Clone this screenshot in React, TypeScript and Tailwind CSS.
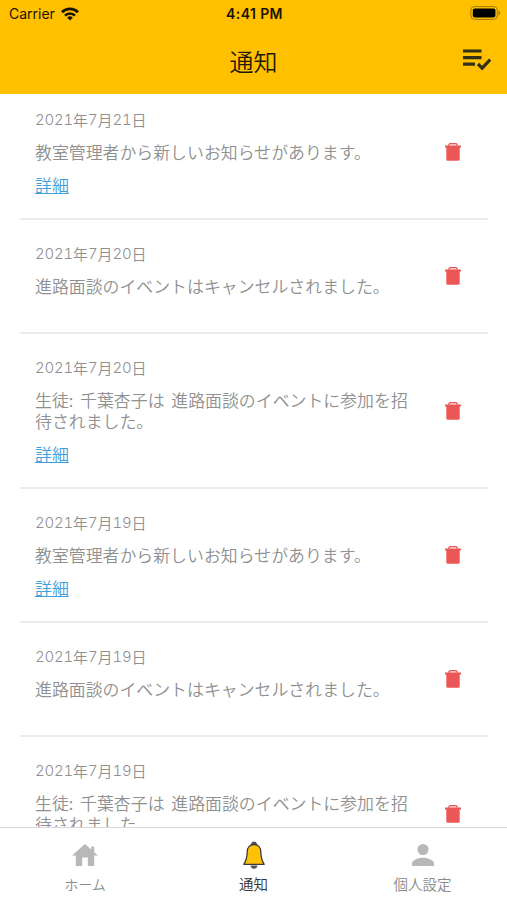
type Notice = {
  id: number;
  date: string;
  message: string;
  hasDetail: boolean;
};

const notices: Notice[] = [
  { id: 1, date: "2021年7月21日", message: "教室管理者から新しいお知らせがあります。", hasDetail: true },
  { id: 2, date: "2021年7月20日", message: "進路面談のイベントはキャンセルされました。", hasDetail: false },
  { id: 3, date: "2021年7月20日", message: "生徒: 千葉杏子は 進路面談のイベントに参加を招待されました。", hasDetail: true },
  { id: 4, date: "2021年7月19日", message: "教室管理者から新しいお知らせがあります。", hasDetail: true },
  { id: 5, date: "2021年7月19日", message: "進路面談のイベントはキャンセルされました。", hasDetail: false },
  { id: 6, date: "2021年7月19日", message: "生徒: 千葉杏子は 進路面談のイベントに参加を招待されました。", hasDetail: true },
];

function WifiIcon() {
  return (
    <svg viewBox="0 0 18 14" className="w-[18px] h-[14px]" fill="none" stroke="#1a1400" strokeWidth="2.7">
      <path d="M1 5.2a11.3 11.3 0 0 1 16 0" />
      <path d="M4 8.6a7 7 0 0 1 10 0" />
      <path d="M9 13.6 6.2 10.7a4 4 0 0 1 5.6 0z" fill="#1a1400" stroke="none" />
    </svg>
  );
}

function BatteryIcon() {
  return (
    <svg viewBox="0 0 31 14" className="w-[31px] h-[14px]">
      <rect x="0.9" y="0.6" width="26.4" height="12.8" rx="3.6" fill="none" stroke="#a37b00" strokeWidth="1" />
      <rect x="2.8" y="2.6" width="22.6" height="8.8" rx="2" fill="#000" />
      <path d="M28.5 4.6v4.8c1-.4 1.7-1.4 1.7-2.4s-.7-2-1.7-2.4z" fill="#a37b00" />
    </svg>
  );
}

function ReadAllIcon() {
  return (
    <svg viewBox="0 0 28 21" className="w-7 h-[21px]" fill="none" stroke="#333018" strokeWidth="3.2">
      <path d="M0 2h18.5M0 8.6h18.5M0 15.2h12" />
      <path d="m15 15 4.2 4.2L27.2 10.5" />
    </svg>
  );
}

function TrashIcon() {
  return (
    <svg viewBox="0 0 18 20" className="w-[18px] h-5" fill="#eb5757">
      <path d="M4.3 3.7 5.8 1.6h6.4l1.5 2.1" fill="#fbdcdc" stroke="#eb5757" strokeWidth="1.2" />
      <path d="M1 3.6h16v1.8H15.7v11.8a1.5 1.5 0 0 1-1.5 1.5H3.8a1.5 1.5 0 0 1-1.5-1.5V5.4H1z" />
    </svg>
  );
}

function HomeIcon() {
  return (
    <svg viewBox="0 0 26 22" className="w-[26px] h-[22px]" fill="#b8b8b8">
      <path d="M13 0 0 11.6h3.8V22h6.4v-8.4h5.6V22h6.4V11.6H26l-3.8-3.4V2.6h-3v2.9z" />
    </svg>
  );
}

function BellIcon() {
  return (
    <svg viewBox="0 0 24 28" className="w-6 h-7" stroke="#3a3a3a" strokeWidth="1.3" strokeLinejoin="round">
      <path d="M9.2 25.2h5.6c-.6 1.3-1.6 1.8-2.8 1.8s-2.2-.5-2.8-1.8z" fill="#3a3a3a" stroke="#555" />
      <path d="M9.6 3.2C10 1.7 10.8 1.2 12 1.2s2 .5 2.4 2z" fill="#3a3a3a" stroke="#555" />
      <path d="M12 3.5c-4.3 0-6.8 3.1-6.8 7.3 0 6-.7 8.6-3.4 12.5h20.4c-2.7-3.9-3.4-6.5-3.4-12.5 0-4.2-2.5-7.3-6.8-7.3z" fill="#ffc107" />
    </svg>
  );
}

function PersonIcon() {
  return (
    <svg viewBox="0 0 22 22" className="w-[22px] h-[22px]" fill="#b8b8b8">
      <circle cx="11" cy="5.5" r="5.5" />
      <path d="M0 22v-2.7c0-3.7 7.3-5.6 11-5.6s11 1.9 11 5.600V22z" />
    </svg>
  );
}

// Digits use a wider face than the kanji around them
function NoticeDate({ value }: { value: string }) {
  return (
    <p className="flex h-[18px] text-[15px] leading-[18px]">
      {value.split(/(\d+)/).map((part, i) => (
        <span key={i} className={/\d/.test(part) ? "font-['Inter',sans-serif] tabular-nums tracking-[-0.2px]" : ""}>
          {part}
        </span>
      ))}
    </p>
  );
}

function NoticeRow({ notice }: { notice: Notice }) {
  return (
    <li className="flex items-center border-b-2 border-[#e9ebed] pl-[15px] pr-[26px]">
      <div className={`w-[378px] pt-[25px] text-[#909090] ${notice.hasDetail ? "pb-[23px]" : "pb-[36px]"}`}>
        <NoticeDate value={notice.date} />
        <p className="mt-3 text-[16.9px] leading-[21px] [word-spacing:3px]">{notice.message}</p>
        {notice.hasDetail && (
          <a href="#" className="mt-3 block h-[21px] w-fit text-[16.9px] leading-[21px] text-[#3f9fdc] underline underline-offset-1">
            詳細
          </a>
        )}
      </div>
      <button className="ml-auto" aria-label="削除">
        <TrashIcon />
      </button>
    </li>
  );
}

export default function App() {
  return (
    <div className="flex h-[900px] w-[507px] flex-col overflow-hidden bg-white font-['Noto_Sans_CJK_JP',sans-serif] font-[350]">
      <header className="h-[94px] shrink-0 bg-[#ffc000]">
        {/* Status bar */}
        <div className="grid h-[26px] grid-cols-3 items-center pl-[9px] pr-[6px] font-['Inter',sans-serif] text-[14px] text-[#1a1400]">
          <div className="flex items-center gap-[6px] pt-px font-normal">
            Carrier
            <WifiIcon />
          </div>
          <span className="pr-px pt-px text-center font-semibold tracking-[0.4px]">4:41 PM</span>
          <div className="flex justify-end">
            <BatteryIcon />
          </div>
        </div>
        <div className="grid h-[70px] grid-cols-3 items-center pr-4">
          <span />
          <h1 className="pl-4 text-center text-[24px] text-[#1f1a08]">通知</h1>
          <button className="mb-1 ml-auto" aria-label="すべて既読">
            <ReadAllIcon />
          </button>
        </div>
      </header>

      {/* List sits slightly scrolled under the header */}
      <main className="min-h-0 flex-1 overflow-hidden">
        <ul className="-mt-[8px] ml-[20px] mr-[19px]">
          {notices.map((notice) => (
            <NoticeRow key={notice.id} notice={notice} />
          ))}
        </ul>
      </main>

      <nav className="grid h-[73px] shrink-0 grid-cols-3 border-t border-[#d8d8d8] text-[14px] leading-[18px] text-[#8a8a8a]">
        <div className="flex flex-col items-center pl-px pt-[13px]">
          <div className="flex h-7 items-center"><HomeIcon /></div>
          <span className="mt-[6px]">ホーム</span>
        </div>
        <div className="flex flex-col items-center pt-[13px] text-[#333]">
          <BellIcon />
          <span className="mt-[6px] text-[14.5px]">通知</span>
        </div>
        <div className="flex flex-col items-center pt-[13px]">
          <div className="flex h-7 items-center"><PersonIcon /></div>
          <span className="mt-[6px] text-[14.5px]">個人設定</span>
        </div>
      </nav>
    </div>
  );
}
